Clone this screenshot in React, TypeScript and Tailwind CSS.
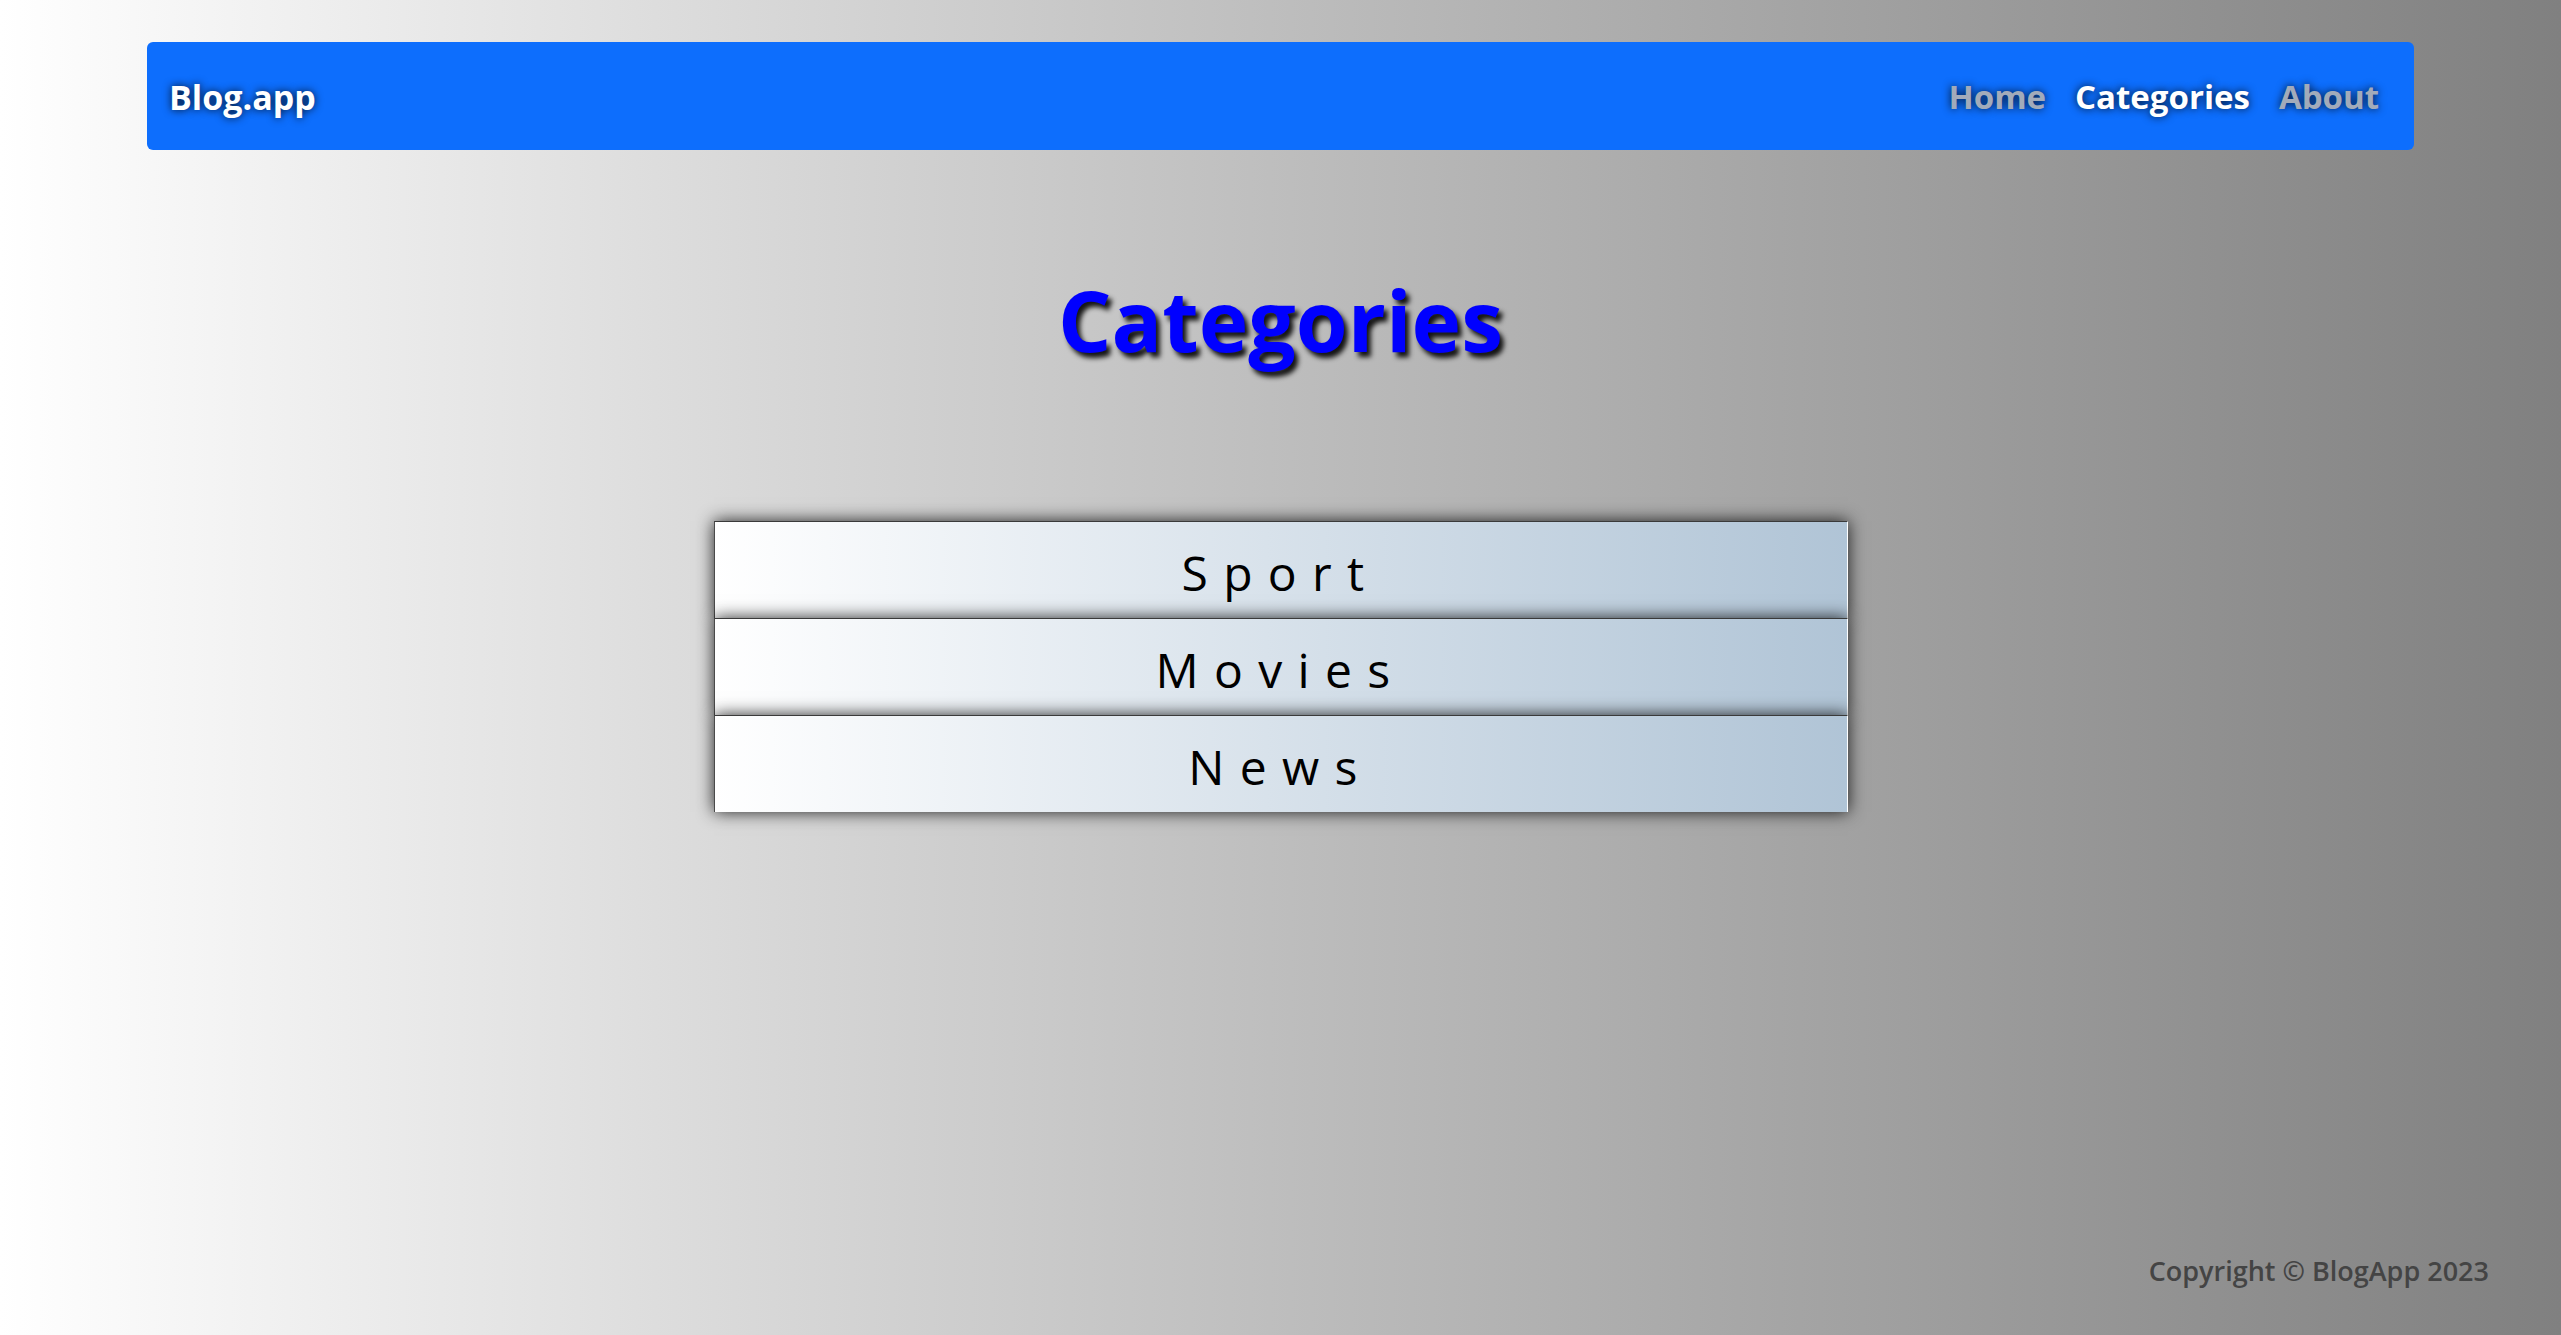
const CATEGORIES = ['Sport', 'Movies', 'News']

const NAV = [
  { label: 'Home', active: false },
  { label: 'Categories', active: true },
  { label: 'About', active: false },
]

export default function App() {
  return (
    <div className="min-h-screen flex flex-col bg-linear-to-r from-white to-[#808080] font-['Open_Sans','Noto_Sans',sans-serif]">
      {/* Navbar */}
      <nav className="mx-[147px] mt-[42px] h-[108px] rounded-md bg-[#0d6efd] flex items-center justify-between pl-[22px] pr-[35px] pt-[2px]">
        <a
          href="#"
          className="text-[34px] font-bold text-white [text-shadow:0_0_8px_rgba(0,0,0,0.85)]"
        >
          Blog.app
        </a>
        <ul className="flex items-center gap-[29px]">
          {NAV.map((item) => (
            <li key={item.label}>
              <a
                href="#"
                className={
                  item.active
                    ? 'text-[33px] font-bold text-white [text-shadow:0_0_8px_rgba(0,0,0,0.85)]'
                    : 'text-[33px] font-bold text-[#a2abba] [text-shadow:0_0_8px_rgba(0,0,0,0.85)]'
                }
              >
                {item.label}
              </a>
            </li>
          ))}
        </ul>
      </nav>

      {/* Heading */}
      <h1 className="mt-[117px] text-center text-[84px] font-bold leading-tight text-[#0000ff] [text-shadow:4px_5px_5px_rgba(0,0,0,0.9)]">
        Categories
      </h1>

      {/* Category list */}
      <ul className="mx-auto mt-[149px] w-[1134px] flex flex-col">
        {CATEGORIES.map((c) => (
          <li
            key={c}
            className="h-[97px] pt-[6px] flex items-center justify-center border-t border-l border-r border-t-[#3a3a3a] border-l-[#4a4a4a] border-r-white bg-linear-to-r from-white to-[#b0c4d6] shadow-[0_0_16px_rgba(0,0,0,0.85)] text-[48px] tracking-[0.32em] text-black"
          >
            {c}
          </li>
        ))}
      </ul>

      {/* Footer */}
      <footer className="mt-auto flex justify-end pr-[72px] pb-[44px]">
        <p className="text-[27px] font-semibold text-[#444]">Copyright © BlogApp 2023</p>
      </footer>
    </div>
  )
}
